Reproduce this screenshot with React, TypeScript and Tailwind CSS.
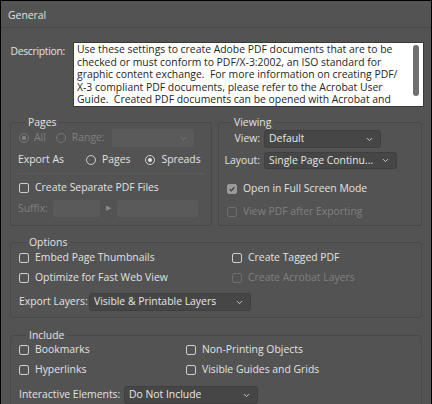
import { ChevronDown } from "lucide-react";

const font = "font-['Open_Sans',sans-serif]";

function Radio({ checked, disabled }: { checked?: boolean; disabled?: boolean }) {
  return (
    <span
      className={`flex h-[10px] w-[10px] shrink-0 items-center justify-center rounded-full border ${
        disabled ? "border-[#777]" : "border-[#cfcfcf]"
      }`}
    >
      {checked && (
        <span className={`h-[4px] w-[4px] rounded-full ${disabled ? "bg-[#888]" : "bg-[#e8e8e8]"}`} />
      )}
    </span>
  );
}

function Check({ checked, disabled }: { checked?: boolean; disabled?: boolean }) {
  return (
    <span
      className={`flex h-[10px] w-[10px] shrink-0 items-center justify-center rounded-[2px] border ${
        disabled ? "border-[#6e6e6e]" : checked ? "border-[#9a9a9a] bg-[#9a9a9a]" : "border-[#cfcfcf]"
      }`}
    >
      {checked && (
        <svg viewBox="0 0 10 10" className="h-[8px] w-[8px]">
          <path d="M2 5.2 L4.2 7.3 L8 2.6" fill="none" stroke="#3c3c3c" strokeWidth="1.6" />
        </svg>
      )}
    </span>
  );
}

function CheckRow({
  label,
  checked,
  disabled,
}: {
  label: string;
  checked?: boolean;
  disabled?: boolean;
}) {
  return (
    <div className="flex h-[10px] items-center gap-[6px]">
      <Check checked={checked} disabled={disabled} />
      <span className={disabled ? "text-[#808080]" : "text-[#e2e2e2]"}>{label}</span>
    </div>
  );
}

function Select({ value, className }: { value: string; className: string }) {
  return (
    <div
      className={`flex items-center justify-between rounded-[3px] border border-[#3f3f3f] bg-[#464646] pl-[4px] pr-[6px] text-[#e6e6e6] ${className}`}
    >
      <span className="truncate">{value}</span>
      <ChevronDown size={9} strokeWidth={2.5} className="text-[#cfcfcf]" />
    </div>
  );
}

function Group({
  title,
  className,
  children,
}: {
  title: string;
  className: string;
  children: React.ReactNode;
}) {
  return (
    <fieldset className={`rounded-[3px] border border-[#484848] ${className}`}>
      <legend className="ml-[7px] px-[3px] leading-[12px] text-[#e2e2e2]">{title}</legend>
      {children}
    </fieldset>
  );
}

export default function App() {
  return (
    <div
      className={`${font} h-[404px] w-[432px] overflow-hidden border-x border-t border-black bg-[#535353] text-[10.4px] text-[#e2e2e2]`}
    >
      <div className="flex h-[27px] items-end border-b border-[#474747] px-[7px] pb-[3px]">
        General
      </div>

      <div className="mt-[14px] flex pr-[7px]">
        <div className="w-[64px] pt-[2px] text-right tracking-[-0.3px]">Description:</div>
        <div className="ml-[8px] flex h-[65px] flex-1 overflow-hidden border border-[#3a3a3a] bg-white">
          <div className="flex-1 pl-[3px] pr-[8px] leading-[12.6px] text-[#262626]">
            Use these settings to create Adobe PDF documents that are to be checked or must
            conform to PDF/X-3:2002, an ISO standard for graphic content exchange.&nbsp; For more
            information on creating PDF/ X-3 compliant PDF documents, please refer to the Acrobat
            User Guide.&nbsp; Created PDF documents can be opened with Acrobat and Adobe Reader 4.0
            and later.
          </div>
          <div className="w-[10px] shrink-0 pt-[2px]">
            <div className="h-[51px] w-[6px] rounded-full bg-[#707070]" />
          </div>
        </div>
      </div>

      <div className="mt-[9px] flex gap-[6px] px-[9px]">
        <Group title="Pages" className="h-[110px] w-[204px] px-[7px]">
          <div className="mt-[1px] flex h-[18px] items-center">
            <div className="flex items-center gap-[5px] pl-[1px] text-[#808080]">
              <Radio checked disabled />
              <span>All</span>
            </div>
            <div className="ml-[10px] flex items-center gap-[6px] text-[#808080]">
              <Radio disabled />
              <span>Range:</span>
            </div>
            <div className="ml-[7px] flex h-[18px] w-[82px] items-center justify-end rounded-[3px] bg-[#5a5a5a] pr-[6px]">
              <ChevronDown size={9} strokeWidth={2.5} className="text-[#7a7a7a]" />
            </div>
          </div>
          <div className="mt-[5px] flex h-[16px] items-center">
            <span className="w-[68px]">Export As</span>
            <Radio />
            <span className="ml-[6px]">Pages</span>
            <span className="ml-[15px]">
              <Radio checked />
            </span>
            <span className="ml-[6px]">Spreads</span>
          </div>
          <div className="mt-[5px] border-t border-[#5c5c5c]" />
          <div className="mt-[9px] pl-[1px]">
            <CheckRow label="Create Separate PDF Files" />
          </div>
          <div className="mt-[7px] flex h-[17px] items-center text-[#808080]">
            <span className="w-[35px]">Suffix:</span>
            <span className="h-[17px] w-[47px] rounded-[2px] bg-[#5a5a5a]" />
            <span className="ml-[6px] text-[7px] text-[#8a8a8a]">▶</span>
            <span className="ml-[6px] h-[17px] w-[81px] rounded-[2px] bg-[#5a5a5a]" />
          </div>
        </Group>

        <Group title="Viewing" className="h-[110px] w-[206px] px-[5px]">
          <div className="mt-[2px] flex h-[18px] items-center">
            <span className="w-[36px] text-right">View:</span>
            <Select value="Default" className="ml-[4px] h-[18px] w-[117px]" />
          </div>
          <div className="mt-[4px] flex h-[17px] items-center">
            <span className="w-[36px] text-right">Layout:</span>
            <Select value="Single Page Continu..." className="ml-[4px] h-[17px] w-[133px]" />
          </div>
          <div className="mt-[15px] pl-[3px]">
            <CheckRow label="Open in Full Screen Mode" checked />
          </div>
          <div className="mt-[13px] pl-[3px]">
            <CheckRow label="View PDF after Exporting" disabled />
          </div>
        </Group>
      </div>

      <div className="mt-[10px] px-[9px]">
        <Group title="Options" className="h-[82px] px-[8px]">
          <div className="mt-[5px] grid grid-cols-[213px_1fr]">
            <CheckRow label="Embed Page Thumbnails" />
            <CheckRow label="Create Tagged PDF" />
          </div>
          <div className="mt-[10px] grid grid-cols-[213px_1fr]">
            <CheckRow label="Optimize for Fast Web View" />
            <CheckRow label="Create Acrobat Layers" disabled />
          </div>
          <div className="mt-[10px] flex h-[18px] items-center">
            <span className="w-[70px]">Export Layers:</span>
            <Select value="Visible & Printable Layers" className="h-[18px] w-[162px]" />
          </div>
        </Group>
      </div>

      <div className="mt-[11px] px-[9px]">
        <Group title="Include" className="h-[90px] px-[8px]">
          <div className="mt-[4px] grid grid-cols-[167px_1fr]">
            <CheckRow label="Bookmarks" />
            <CheckRow label="Non-Printing Objects" />
          </div>
          <div className="mt-[10px] grid grid-cols-[167px_1fr]">
            <CheckRow label="Hyperlinks" />
            <CheckRow label="Visible Guides and Grids" />
          </div>
          <div className="mt-[11px] flex h-[18px] items-center">
            <span className="w-[105px]">Interactive Elements:</span>
            <Select value="Do Not Include" className="h-[18px] w-[134px]" />
          </div>
        </Group>
      </div>
    </div>
  );
}
